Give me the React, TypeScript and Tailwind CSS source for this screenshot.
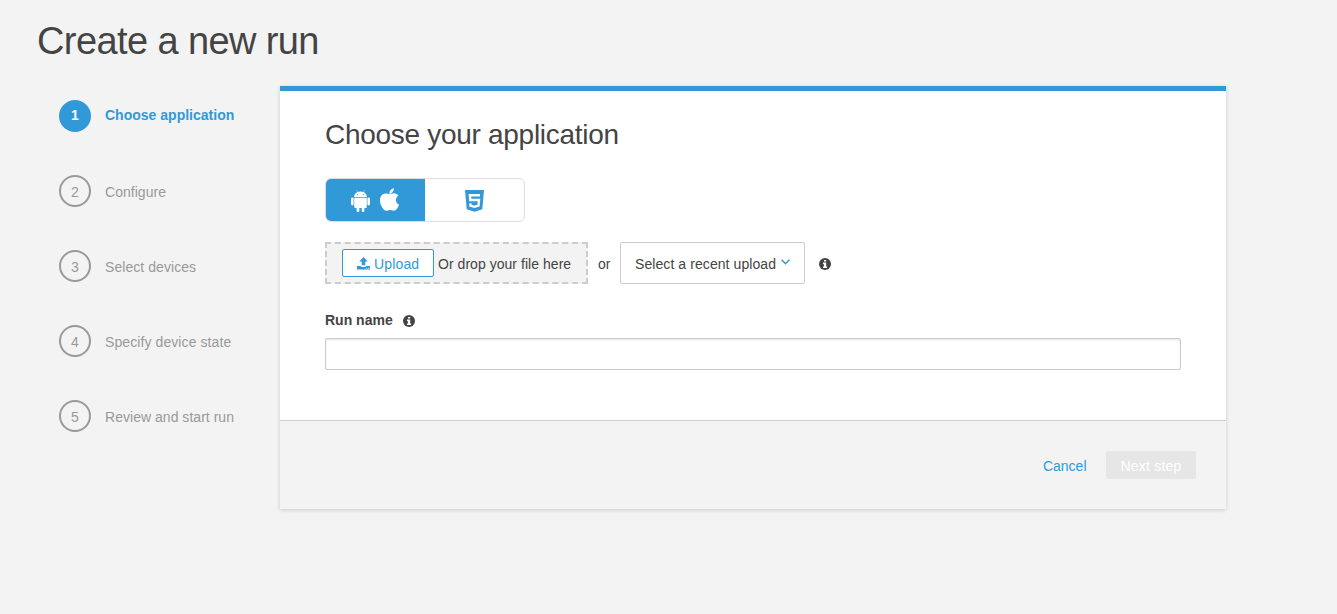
const steps = [
  { label: "Choose application", style: "tracking-[0.01px]" },
  { label: "Configure", style: "tracking-[0.03px]" },
  { label: "Select devices", style: "tracking-[0.06px]" },
  { label: "Specify device state", style: "tracking-[0.09px]" },
  { label: "Review and start run", style: "tracking-[0.03px]" },
];

function InfoIcon() {
  return (
    <svg viewBox="0 0 12 12" className="size-3 shrink-0">
      <circle cx="6" cy="6" r="6" fill="#444" />
      <path d="M5 1.900h2.200v1.700H5zM4 4.600h3.200v3.800h.9v1.700H4V8.400h1V6.200H4z" fill="#fff" />
    </svg>
  );
}

function UploadIcon() {
  return (
    <svg viewBox="0 0 13 13" className="h-[13px] w-[13px] shrink-0" fill="#3199d8">
      <path d="M6.500 0L10.800 4.500H8.300V8.300H4.700V4.500H2.200z" />
      <path
        fillRule="evenodd"
        d="M0 9h3.900c.2.600.8 1 1.500 1h2.200c.7 0 1.300-.4 1.500-1H13v3.500H0zM9.300 10.800v.9h.9v-.9zM11.200 10.800v.9h.9v-.9z"
      />
    </svg>
  );
}

function AndroidIcon() {
  return (
    <svg viewBox="0 0 19 22" className="h-[22px] w-[19px] shrink-0" fill="#fff">
      <path
        fillRule="evenodd"
        d="M3.100 7C3.200 4.900 4.400 3.100 6.400 2.100L5.400.3l.3-.2 1 1.800c1.700-.7 3.900-.7 5.600 0l1-1.800.3.2-1 1.800c2 1 3.200 2.800 3.300 4.900zM6.600 4a.6.600 0 1 0 0 1.200.6.600 0 0 0 0-1.200zM12.400 4a.6.600 0 1 0 0 1.200.6.600 0 0 0 0-1.200z"
      />
      <path d="M3.200 7.700h12.600v9c0 .8-.6 1.400-1.400 1.400h-1v2.600a1.350 1.350 0 0 1-2.700 0v-2.600H8.300v2.600a1.350 1.350 0 0 1-2.700 0v-2.600h-1c-.8 0-1.400-.6-1.400-1.400z" />
      <rect x="0" y="7.500" width="2.600" height="7.900" rx="1.300" />
      <rect x="16.400" y="7.500" width="2.600" height="7.900" rx="1.300" />
    </svg>
  );
}

function AppleIcon() {
  return (
    <svg viewBox="0 0 1393 1664" className="h-[23px] w-[19px] shrink-0" fill="#fff">
      <path d="M1393 1215q-39 125-123 250q-129 196-257 196q-49 0-140-32q-86-32-151-32q-61 0-142 33q-81 34-132 34q-152 0-301-259q-147-261-147-503q0-228 113-374q112-144 284-144q72 0 177 30q104 30 138 30q45 0 143-34q102-34 173-34q119 0 213 65q52 36 104 100q-79 67-114 118q-65 94-65 207q0 124 69 223t158 126zM1017 42q0 61-29 136q-30 75-93 138q-54 54-108 72q-37 11-104 17q3-149 78-257q74-107 250-148q1 3 2.500 11t2.500 11q0 4 .5 10t.5 10z" />
    </svg>
  );
}

function Html5Icon() {
  return (
    <svg viewBox="0 0 19 22" className="mt-px h-[22px] w-[19px] shrink-0">
      <path d="M0 0h19l-1.700 19.300L9.500 21.800 1.700 19.300z" fill="#3199d8" />
      <path d="M15 5.300H4.900l.4 4.700h8.700l-.5 5.600-4 1.200-4-1.200-.2-2.300" fill="none" stroke="#fff" strokeWidth="2.400" />
    </svg>
  );
}

export default function App() {
  return (
    <div className="h-[614px] w-[1337px] overflow-hidden bg-[#f3f3f3] font-['Liberation_Sans',Arial,sans-serif] text-sm text-[#444]">
      <h1 className="h-[86px] pt-[18px] pl-[37px] text-[38px] leading-[46px] tracking-[-0.6px] whitespace-nowrap">
        Create a new run
      </h1>
      <div className="flex">
        <ol className="w-[280px] shrink-0 pt-[14px] pl-[59px]">
          {steps.map((s, i) => (
            <li
              key={s.label}
              className={`flex h-[75px] items-start gap-[14px] whitespace-nowrap ${s.style} ${i === 0 ? "font-bold text-[#3199d8]" : "text-[#999]"}`}
            >
              <span
                className={`flex size-8 items-center justify-center rounded-full ${i === 0 ? "bg-[#3199d8] pb-0.5 text-white" : "border-2 border-[#999] pt-0.5"}`}
              >
                {i + 1}
              </span>
              <span className={i === 0 ? "leading-[30px]" : "leading-[34px]"}>{s.label}</span>
            </li>
          ))}
        </ol>
        <main className="flex h-[423px] w-[946px] flex-col border-t-[5px] border-[#3199d8] bg-white shadow-[0_1px_4px_rgba(0,0,0,0.17)]">
          <section className="h-[329px] px-[45px] pt-[27px]">
            <h2 className="h-[60px] text-[28px] leading-[34px] tracking-[-0.29px]">Choose your application</h2>
            <div className="flex h-11 w-[200px] overflow-hidden rounded-md border border-[#ddd]">
              <button className="flex w-[99px] items-start justify-center gap-2.5 bg-[#3199d8] pr-px">
                <span className="pt-[11px]"><AndroidIcon /></span>
                <span className="pt-[9px]"><AppleIcon /></span>
              </button>
              <button className="flex flex-1 items-start justify-center pt-2.5">
                <Html5Icon />
              </button>
            </div>
            <div className="mt-5 flex items-center whitespace-nowrap">
              <div className="flex h-[42px] w-[263px] items-center border-2 border-dashed border-[#ccc] bg-[#f3f3f3] pl-[15px]">
                <button className="flex h-7 w-[92px] items-center gap-1 rounded-[2px] border border-[#3199d8] bg-white pl-[14px] tracking-[0.15px] text-[#3199d8]">
                  <UploadIcon />
                  <span className="pt-0.5">Upload</span>
                </button>
                <span className="ml-1 pt-0.5 tracking-[0.04px]">Or drop your file here</span>
              </div>
              <span className="ml-[10px] w-[22px] pt-0.5">or</span>
              <button className="flex h-[42px] w-[185px] items-center rounded-[2px] border border-[#ccc] bg-white pl-[14px] tracking-[0.08px]">
                <span className="pt-0.5">Select a recent upload</span>
                <svg viewBox="0 0 9 6" className="mb-[3px] ml-[5px] h-1.5 w-[9px]" fill="none" stroke="#3199d8" strokeWidth="1.500">
                  <path d="M.6.800l3.900 3.900L8.400.800" />
                </svg>
              </button>
              <span className="ml-[14px] pt-0.5"><InfoIcon /></span>
            </div>
            <label className="mt-[26px] flex h-5 items-center gap-[10px] font-bold">
              Run name
              <span className="pt-0.5"><InfoIcon /></span>
            </label>
            <input className="mt-2 block h-8 w-[856px] rounded-[2px] border border-[#ccc] bg-white shadow-[inset_0_1px_2px_rgba(0,0,0,0.12)] outline-none" />
          </section>
          <footer className="flex flex-1 items-start justify-end border-t border-[#ccc] bg-[#f3f3f3] pt-[30px] pr-[30px]">
            <button className="mr-[19.500px] h-7 pt-0.5 text-[#3199d8]">Cancel</button>
            <button className="h-7 w-[90px] rounded-[2px] bg-[#e6e6e6] pt-0.5 tracking-[0.2px] text-white">Next step</button>
          </footer>
        </main>
      </div>
    </div>
  );
}
